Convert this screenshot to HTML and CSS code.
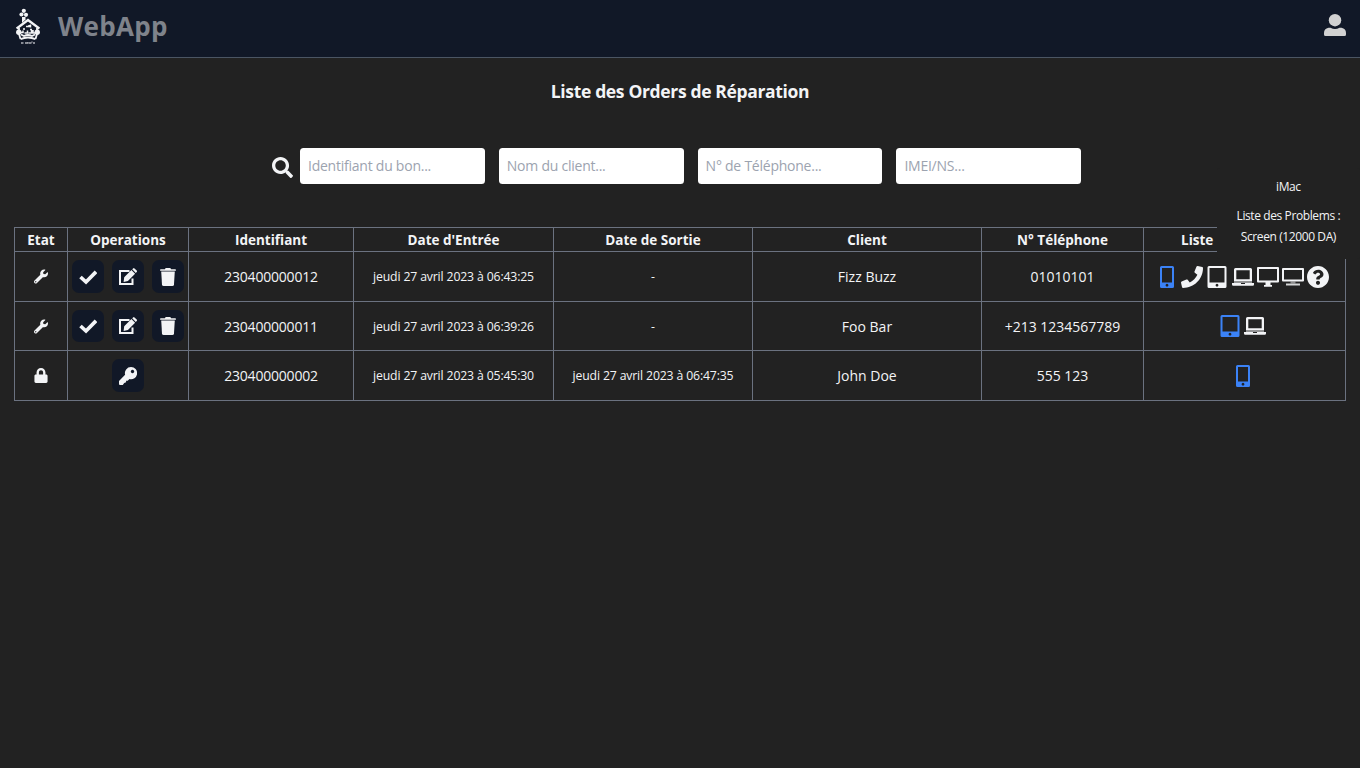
FILE: index.html
```html
<!DOCTYPE html>
<html lang="fr">
<head>
<meta charset="utf-8">
<title>WebApp</title>
<link rel="stylesheet" href="styles.css">
</head>
<body>
<svg class="sprite" aria-hidden="true">
  <symbol id="wrench" viewBox="0 0 512 512"><path d="M507.73 109.1c-2.24-9.03-13.54-12.09-20.12-5.51l-74.36 74.36-67.88-11.31-11.31-67.88 74.36-74.36c6.62-6.62 3.43-17.9-5.66-20.16-47.38-11.74-99.55.91-136.58 37.93-39.64 39.64-50.55 97.1-34.05 147.2L18.74 402.76c-24.99 24.99-24.99 65.51 0 90.5 24.99 24.99 65.51 24.99 90.5 0l213.21-213.21c50.12 16.71 107.47 5.68 147.37-34.22 37.07-37.07 49.7-89.32 37.91-136.73zM64 472c-13.25 0-24-10.75-24-24s10.75-24 24-24 24 10.75 24 24-10.75 24-24 24z"/></symbol>
  <symbol id="lock" viewBox="0 0 448 512"><path d="M400 224h-24v-72C376 68.2 307.8 0 224 0S72 68.2 72 152v72H48c-26.500 0-48 21.500-48 48v192c0 26.500 21.500 48 48 48h352c26.500 0 48-21.500 48-48V272c0-26.500-21.500-48-48-48zm-104 0H152v-72c0-39.700 32.300-72 72-72s72 32.300 72 72v72z"/></symbol>
  <symbol id="check" viewBox="0 0 18 18"><path d="M1.500 9 7 14 17 3.800" fill="none" stroke="currentColor" stroke-width="3.700"/></symbol>
  <symbol id="edit" viewBox="0 0 18 18"><path d="M10.500 3H1v13.100h12.500V10.500" fill="none" stroke="currentColor" stroke-width="2"/><path d="m5.200 9.300 7.200-7.200 3.700 3.700-7.200 7.200-4.300.900zM13.200 1.300l.900-.900q.700-.700 1.400 0l2.200 2.200q.700.700 0 1.400l-.900.900z"/></symbol>
  <symbol id="trash" viewBox="0 0 448 512"><path d="M432 32H312l-9.400-18.700A24 24 0 0 0 281.100 0H166.800a23.720 23.720 0 0 0-21.400 13.300L136 32H16A16 16 0 0 0 0 48v32h448V48a16 16 0 0 0-16-16z"/><path d="M32 80h384v44H32z" opacity=".5"/><path d="M32 116h384l-21.200 351a48 48 0 0 1-47.900 45H101.100a48 48 0 0 1-47.900-45z"/></symbol>
  <symbol id="key" viewBox="0 0 18 18"><path fill-rule="evenodd" d="M12 0a6.100 6.100 0 1 1-1.500 12L8.700 13.700H7.100v1.600L5.200 16l-1.400 2H1q-1 0-1-1v-3l6.100-6.300A6.100 6.100 0 0 1 12 0zm1.500 2.800a1.700 1.700 0 1 0 .01 0z"/></symbol>
  <symbol id="search" viewBox="0 0 512 512"><path d="M505 442.700L405.300 343c-4.500-4.500-10.600-7-17-7H372c27.600-35.300 44-79.700 44-128C416 93.100 322.900 0 208 0S0 93.100 0 208s93.100 208 208 208c48.300 0 92.700-16.400 128-44v16.300c0 6.400 2.500 12.500 7 17l99.700 99.700c9.400 9.400 24.600 9.400 33.900 0l28.300-28.300c9.400-9.400 9.400-24.600.1-34zM208 336c-70.700 0-128-57.200-128-128 0-70.700 57.200-128 128-128 70.700 0 128 57.200 128 128 0 70.700-57.200 128-128 128z"/></symbol>
  <symbol id="mobile" viewBox="0 0 22 22"><path fill-rule="evenodd" d="M5.500 0h11Q18 0 18 1.500v19Q18 22 16.500 22h-11Q4 22 4 20.500v-19Q4 0 5.500 0zM6 2v14.500h10V2zm5 15.800a1.400 1.400 0 1 0 .01 0z"/></symbol>
  <symbol id="phone" viewBox="0 0 512 512"><path d="M493.400 24.600l-104-24c-11.300-2.600-22.900 3.300-27.500 13.900l-48 112c-4.200 9.800-1.400 21.300 6.900 28l60.600 49.600c-36 76.700-98.900 140.500-177.200 177.200l-49.600-60.600c-6.800-8.300-18.200-11.100-28-6.900l-112 48C3.900 366.500-2 378.100.6 389.400l24 104C27.100 504.200 36.700 512 48 512c256.100 0 464-207.500 464-464 0-11.200-7.700-20.900-18.600-23.400z"/></symbol>
  <symbol id="tablet" viewBox="0 0 22 22"><path fill-rule="evenodd" d="M3 0h16q1.500 0 1.500 1.500v19Q20.500 22 19 22H3q-1.500 0-1.500-1.500v-19Q1.500 0 3 0zm.5 2v14.500h15V2zM11 17.800a1.400 1.400 0 1 0 .01 0z"/></symbol>
  <symbol id="laptop" viewBox="0 0 22 22"><path fill-rule="evenodd" d="M3.500 2h15q1.500 0 1.500 1.500V15H2V3.500Q2 2 3.500 2zM4.300 4.200v9h13.400v-9z"/><path d="M2 15h18v2H2z" opacity=".55"/><path d="M0 17h9v1h4v-1h9v1.500q0 1.300-1.300 1.300H1.300Q0 19.800 0 18.500z"/></symbol>
  <symbol id="display" viewBox="0 0 22 22"><path fill-rule="evenodd" d="M1 1h20q1 0 1 1v13.500q0 1-1 1h-7.500V19H15v1.800H7V19h1.500v-2.500H1q-1 0-1-1V2q0-1 1-1zm1 2v11.500h18V3z"/></symbol>
  <symbol id="imac" viewBox="0 0 22 22"><path fill-rule="evenodd" d="M1 2h20q1 0 1 1v11.500q0 1-1 1H1q-1 0-1-1V3q0-1 1-1zm1 2v9.500h18V4z"/><path d="M8.500 15.500h5v2h-5z" opacity=".5"/><path d="M4 17.500h14v2H4z" opacity=".85"/></symbol>
  <symbol id="question" viewBox="8 8 496 496"><path d="M504 256c0 136.997-111.043 248-248 248S8 392.997 8 256C8 119.083 119.043 8 256 8s248 111.083 248 248zM262.655 90c-54.497 0-89.255 22.957-116.549 63.758-3.536 5.286-2.353 12.415 2.715 16.258l34.699 26.310c5.205 3.947 12.621 3.008 16.665-2.122 17.864-22.658 30.113-35.797 57.303-35.797 20.429 0 45.698 13.148 45.698 32.958 0 14.976-12.363 22.667-32.534 33.976C247.128 238.528 216 254.941 216 296v4c0 6.627 5.373 12 12 12h56c6.627 0 12-5.373 12-12v-1.333c0-28.462 83.186-29.647 83.186-106.667 0-58.002-60.165-102-116.531-102zM256 338c-25.365 0-46 20.635-46 46 0 25.364 20.635 46 46 46s46-20.636 46-46c0-25.365-20.635-46-46-46z"/></symbol>
</svg>
<header class="topbar">
  <a class="brand">
    <svg class="logo" viewBox="0 0 24 36"><g fill="currentColor"><circle cx="7.800" cy="2.800" r="2.100"/><circle cx="5.500" cy="6.500" r="2.100"/><circle cx="10" cy="6.800" r="2.100"/><path d="M6 9h3.500v2.500L6 15z"/><circle cx="2.800" cy="24.200" r="2.700"/><circle cx="21.200" cy="24.200" r="2.700"/></g><g fill="none" stroke="currentColor"><path d="M.6 20.500 12 12l11.400 8.500" stroke-width="2.400"/><path d="M3 20v3M21 20v3M3 26l1.500 5M21 26l-1.500 5" stroke-width="1.800"/><path d="M10 18.500h3v-1.500M14.500 16.500v3M5 24.500h2v-2M8.500 25h3v-2.500M12.500 25h3V22M17 22v3h2M7 21h2M14 21.500h2" stroke-width="1.500"/><path d="M5 26.500l3 1.500q4-2 8 0l3-1.500M4.500 31.200q7.500-3.500 15 0" stroke-width="1.900"/><path d="M5 35h2.500M9 35h3v-1M13 35h2.500M17 35h2M16 33.500v1" stroke-width="1.300" opacity=".7"/></g></svg>
    <span>WebApp</span>
  </a>
  <svg class="user" viewBox="0 0 22 22"><circle cx="11" cy="6.200" r="6.200"/><path d="M4.500 13.700h2q4.500 2.500 9 0h2Q22 14.500 22 19v1.500q0 1.500-1.500 1.500h-19Q0 22 0 20.500V19q0-4.500 4.500-5.300z"/></svg>
</header>
<main>
  <h1>Liste des Orders de Réparation</h1>
  <form class="filters">
    <svg class="search-icon"><use href="#search"/></svg>
    <input type="text" placeholder="Identifiant du bon...">
    <input type="text" placeholder="Nom du client...">
    <input type="text" placeholder="N° de Téléphone...">
    <input type="text" placeholder="IMEI/NS...">
  </form>
  <table>
    <colgroup><col class="c-state"><col class="c-ops"><col class="c-id"><col class="c-in"><col class="c-out"><col class="c-client"><col class="c-phone"><col class="c-devices"></colgroup>
    <thead>
      <tr><th>Etat</th><th>Operations</th><th>Identifiant</th><th>Date d'Entrée</th><th>Date de Sortie</th><th>Client</th><th>N° Téléphone</th><th class="list-head">Liste</th></tr>
    </thead>
    <tbody>
      <tr>
        <td><svg class="state"><use href="#wrench"/></svg></td>
        <td><div class="ops"><button><svg><use href="#check"/></svg></button><button><svg><use href="#edit"/></svg></button><button><svg><use href="#trash"/></svg></button></div></td>
        <td class="number">230400000012</td><td class="date">jeudi 27 avril 2023 à 06:43:25</td><td class="date">-</td><td>Fizz Buzz</td><td>01010101</td>
        <td><div class="devices">
          <svg class="active"><use href="#mobile"/></svg><svg><use href="#phone"/></svg><svg><use href="#tablet"/></svg><svg><use href="#laptop"/></svg><svg><use href="#display"/></svg>
          <span class="device"><svg><use href="#imac"/></svg><span class="tooltip"><span class="tip-title">iMac</span><span class="tip-list">Liste des Problems :</span><span class="tip-item">Screen (12000 DA)</span></span></span>
          <svg><use href="#question"/></svg>
        </div></td>
      </tr>
      <tr class="short">
        <td><svg class="state"><use href="#wrench"/></svg></td>
        <td><div class="ops"><button><svg><use href="#check"/></svg></button><button><svg><use href="#edit"/></svg></button><button><svg><use href="#trash"/></svg></button></div></td>
        <td class="number">230400000011</td><td class="date">jeudi 27 avril 2023 à 06:39:26</td><td class="date">-</td><td>Foo Bar</td><td>+213 1234567789</td>
        <td><div class="devices"><svg class="active"><use href="#tablet"/></svg><svg><use href="#laptop"/></svg></div></td>
      </tr>
      <tr>
        <td><svg class="state"><use href="#lock"/></svg></td>
        <td><div class="ops"><button><svg><use href="#key"/></svg></button></div></td>
        <td class="number">230400000002</td><td class="date">jeudi 27 avril 2023 à 05:45:30</td><td class="date">jeudi 27 avril 2023 à 06:47:35</td><td>John Doe</td><td>555 123</td>
        <td><div class="devices"><svg class="active"><use href="#mobile"/></svg></div></td>
      </tr>
    </tbody>
  </table>
</main>
</body>
</html>
```
FILE: styles.css
```css
* { box-sizing: border-box; }
body {
  margin: 0;
  min-height: 100vh;
  background: #222;
  color: #f3f4f6;
  font: 14px/21px "Open Sans", "Noto Sans", sans-serif;
  overflow: hidden;
}
svg { display: block; fill: currentColor; }
.sprite { display: none; }
.topbar {
  display: flex;
  justify-content: space-between;
  align-items: flex-start;
  height: 58px;
  padding: 8px 14px 0 16px;
  background: #111827;
  border-bottom: 1px solid #4b5563;
}
.brand {
  display: flex;
  gap: 18px;
  color: #7f838b;
  font-size: 26px;
  line-height: 36px;
  font-weight: 700;
  letter-spacing: 0.35px;
}
.logo { width: 24px; height: 36px; color: #f3f4f6; }
.user { width: 22px; height: 22px; margin-top: 6px; color: #d1d1d1; }
h1 {
  margin: 19px 0 0;
  text-align: center;
  font-size: 17.5px;
  line-height: 28px;
  font-weight: 700;
  letter-spacing: -0.35px;
}
.filters {
  display: flex;
  align-items: center;
  margin: 43px 0 0 272px;
}
.search-icon { width: 21px; height: 21px; margin: 2px 7px 0 0; }
.filters input {
  width: 184.8px;
  height: 36px;
  margin-right: 14px;
  padding: 0 7px 1px 8px;
  border: 0;
  border-radius: 3.5px;
  background: #fff;
  font: inherit;
  letter-spacing: -0.24px;
}
.filters input::placeholder { color: #9ca3af; opacity: 1; }
table {
  width: 1332px;
  margin: 43px 0 0 14px;
  table-layout: fixed;
  border-collapse: collapse;
}
th, td { padding: 0; border: 1px solid #6b7280; text-align: center; }
th { height: 24px; font-size: 13.5px; line-height: 20px; font-weight: 700; padding-top: 1px; }
td { height: 50px; }
.short td { height: 49px; }
.number { letter-spacing: -0.2px; }
.date { font-size: 12.25px; letter-spacing: -0.15px; }
.c-state { width: 53px; }
.c-ops { width: 121px; }
.c-id { width: 165px; }
.c-in { width: 200px; }
.c-out { width: 199px; }
.c-client { width: 229px; }
.c-phone { width: 162px; }
.c-devices { width: 202px; }
.list-head { padding-left: 37px; text-align: left; }
.state { width: 14px; height: 15px; margin: 0 auto; }
.ops { display: flex; justify-content: center; gap: 7.5px; }
.ops button {
  display: grid;
  place-items: center;
  width: 32.5px;
  height: 32.5px;
  padding: 0;
  border: 0;
  border-radius: 7px;
  background: #111827;
  color: inherit;
}
.ops svg { width: 18px; height: 18px; }
.devices { display: flex; justify-content: center; gap: 3.2px; margin-left: -4px; }
.devices svg { width: 22px; height: 22px; }
.devices .active { color: #3b82f6; }
.device { position: relative; }
.tooltip {
  position: absolute;
  top: -98px;
  right: -56px;
  z-index: 1;
  display: flex;
  flex-direction: column;
  align-items: center;
  width: 143px;
  height: 91px;
  padding-top: 8px;
  border-radius: 3px;
  background: #222;
  font-size: 12px;
  letter-spacing: -0.4px;
  white-space: nowrap;
}
.tip-list { margin-top: 8px; }
```
